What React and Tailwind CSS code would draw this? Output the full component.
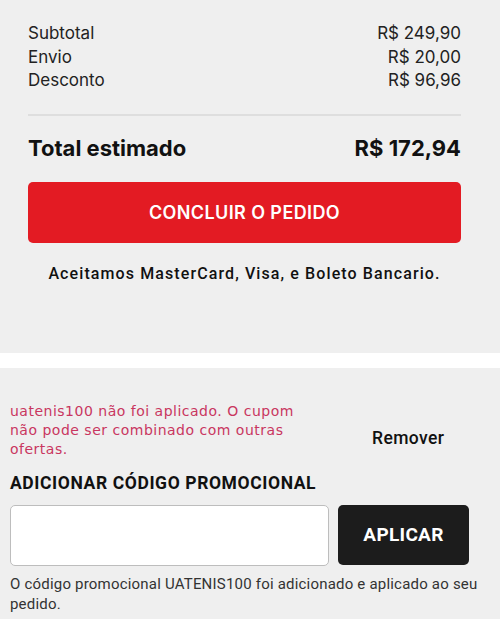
export default function App() {
  return (
    <div className="w-[500px] h-[619px] overflow-hidden bg-white" style={{ fontFamily: "Inter, 'Noto Sans', sans-serif" }}>
      <section className="bg-[#efefef] h-[353px] pl-[28px] pr-[39px] pt-[22px]">
        <div className="text-[17px] leading-[23.5px] text-[#222]">
          <div className="flex justify-between"><span>Subtotal</span><span>R$ 249,90</span></div>
          <div className="flex justify-between"><span>Envio</span><span>R$ 20,00</span></div>
          <div className="flex justify-between"><span>Desconto</span><span>R$ 96,96</span></div>
        </div>
        <div className="mt-[21px] h-[2px] bg-[#dedede]" />
        <div className="mt-[18px] flex justify-between items-center text-[22px] font-bold text-[#111] leading-[28px]">
          <span>Total estimado</span>
          <span>R$ 172,94</span>
        </div>
        <button className="mt-[20px] w-full h-[61px] rounded-[5px] bg-[#e31b23] text-white text-[18px] font-semibold tracking-[0.4px]">
          CONCLUIR O PEDIDO
        </button>
        <p className="mt-[19px] text-center text-[16px] text-[#111] tracking-[1.1px] font-medium" style={{ fontFamily: "Roboto, 'Liberation Sans', sans-serif" }}>
          Aceitamos MasterCard, Visa, e Boleto Bancario.
        </p>
      </section>
      <div className="h-[15px] bg-white" />
      <section className="bg-[#efefef] h-[251px] pl-[10px] pr-[10px] pt-[34px]">
        <div className="flex items-center">
          <p className="w-[300px] whitespace-nowrap text-[14px] leading-[19px] text-[#c93660] tracking-[0.5px]" style={{ fontFamily: "'DejaVu Sans', Verdana, sans-serif" }}>
            uatenis100 não foi aplicado. O cupom<br />não pode ser combinado com outras<br />ofertas.
          </p>
          <span className="ml-[62px] mt-[16px] text-[17.5px] font-medium text-[#111] tracking-[0.4px]" style={{ fontFamily: "Roboto, sans-serif" }}>Remover</span>
        </div>
        <h3 className="mt-[13px] text-[17.5px] leading-[22px] font-bold text-[#111] tracking-[0.6px]" style={{ fontFamily: "Roboto, sans-serif" }}>
          ADICIONAR CÓDIGO PROMOCIONAL
        </h3>
        <div className="mt-[11px] flex gap-[9px]">
          <input className="w-[319px] h-[61px] bg-white border-[1.5px] border-[#bdbdbd] rounded-[5px] outline-none" />
          <button className="w-[131px] h-[60px] rounded-[5px] bg-[#1c1c1c] text-white text-[19px] font-bold tracking-[0.3px]" style={{ fontFamily: "Roboto, sans-serif" }}>
            APLICAR
          </button>
        </div>
        <p className="mt-[8px] text-[15px] leading-[20px] text-[#333] tracking-[0.2px]" style={{ fontFamily: "Roboto, sans-serif" }}>
          O código promocional UATENIS100 foi adicionado e aplicado ao seu pedido.
        </p>
      </section>
    </div>
  );
}
